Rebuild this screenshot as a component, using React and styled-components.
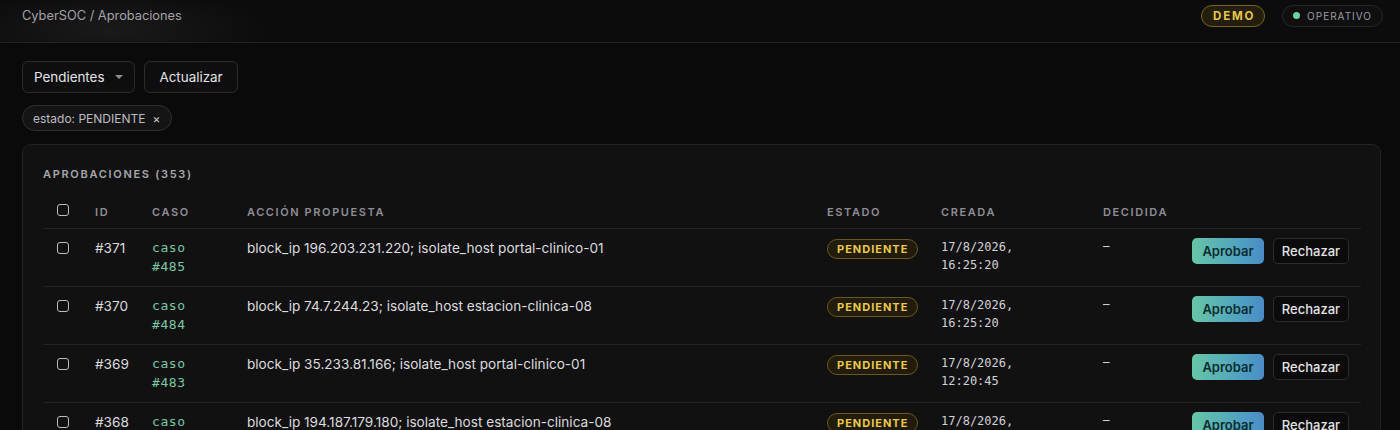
import React from 'react';
import styled, { createGlobalStyle } from 'styled-components';

const GlobalStyle = createGlobalStyle`
  html, body {
    margin: 0;
    background: #0a0a0b;
    color: #e2e2e2;
    font-family: Inter, "Noto Sans", sans-serif;
  }
  * { box-sizing: border-box; }
`;

const Page = styled.div`
  min-height: 430px;
  background: #0a0a0b;
`;

const TopBar = styled.header`
  height: 43px;
  display: flex;
  align-items: center;
  justify-content: space-between;
  padding: 0 17px 0 22px;
  border-bottom: 1px solid #232324;
  background: radial-gradient(ellipse 160px 40px at 110px 30px, #1a1a1b 0%, rgba(10,10,11,0) 100%), #0c0c0d;
`;

const Crumb = styled.div`
  font-size: 12.8px;
  color: #a3a3a6;
  margin-top: -12px;
`;

const Badges = styled.div`
  display: flex;
  align-items: center;
  gap: 17px;
  margin-top: -11px;
`;

const DemoPill = styled.span`
  display: inline-flex;
  align-items: center;
  height: 22px;
  padding: 0 9px 0 11px;
  border-radius: 11px;
  border: 1px solid #7a6520;
  background: #241f0c;
  color: #e9c64a;
  font-size: 11.5px;
  font-weight: 700;
  letter-spacing: 1.8px;
`;

const StatusPill = styled.span`
  display: inline-flex;
  align-items: center;
  gap: 7px;
  height: 22px;
  padding: 0 10px 0 10px;
  border-radius: 11px;
  border: 1px solid #262628;
  background: #0f0f10;
  color: #9c9ca0;
  font-size: 10px;
  letter-spacing: 1px;
`;

const Dot = styled.i`
  width: 7px;
  height: 7px;
  border-radius: 50%;
  background: #6fd0a2;
`;

const Main = styled.main`
  padding: 18px 19px 0 22px;
`;

const Toolbar = styled.div`
  display: flex;
  gap: 9px;
`;

const Control = styled.button`
  height: 32px;
  display: inline-flex;
  align-items: center;
  gap: 11px;
  padding: 0 ${p => (p.$select ? '11px' : '14px')} 0 ${p => (p.$select ? '11px' : '14px')};
  border: 1px solid #2c2c2e;
  border-radius: 6px;
  background: #0e0e0f;
  color: #e4e4e6;
  font: 13.4px Inter, sans-serif;
`;

const Caret = styled.span`
  width: 0;
  height: 0;
  border-left: 4px solid transparent;
  border-right: 4px solid transparent;
  border-top: 4px solid #8e8e92;
`;

const Chip = styled.span`
  display: inline-flex;
  align-items: center;
  gap: 7px;
  margin-top: 12px;
  height: 26px;
  padding: 0 11px 0 10px;
  border-radius: 13px;
  border: 1px solid #303032;
  background: #141415;
  color: #bcbcc0;
  font-size: 12px;
`;

const ChipX = styled.span`
  font-size: 12px;
  color: #c8c8cc;
`;

const Card = styled.section`
  margin-top: 13px;
  border: 1px solid #232325;
  border-radius: 9px;
  background: #111112;
  padding: 22px 20px 0 20px;
  height: 300px;
`;

const CardTitle = styled.h2`
  margin: 0;
  font-size: 11px;
  font-weight: 600;
  letter-spacing: 1.7px;
  color: #a7a7ab;
  line-height: 14px;
`;

const Table = styled.table`
  margin-top: 15px;
  width: 1318px;
  border-collapse: collapse;
  table-layout: fixed;
`;

const Th = styled.th`
  width: ${p => p.$w}px;
  height: 32px;
  padding: 0 0 0 ${p => (p.$pad ?? 10)}px;
  text-align: left;
  font-size: 11px;
  font-weight: 600;
  letter-spacing: 1.6px;
  color: #8e8e92;
  border-bottom: 1px solid #232325;
  vertical-align: middle;
`;

const Tr = styled.tr`
  height: 58px;
  border-bottom: 1px solid #232325;
`;

const Td = styled.td`
  padding: 9px 0 0 ${p => (p.$pad ?? 10)}px;
  vertical-align: top;
  font-size: 13.6px;
  line-height: 20px;
  color: #dcdcde;
`;

const Check = styled.span`
  display: inline-block;
  width: 12px;
  height: 12px;
  margin-top: ${p => (p.$head ? 0 : 4)}px;
  border: 1.5px solid #bdbdc1;
  border-radius: 3px;
`;

const CaseLink = styled.span`
  display: block;
  font-family: "DejaVu Sans Mono", monospace;
  font-size: 13px;
  letter-spacing: 0.6px;
  line-height: 19px;
  color: #79c9a3;
`;

const Line = styled.span`
  display: block;
`;

const Mono = styled.span`
  display: block;
  font-family: "DejaVu Sans Mono", monospace;
  font-size: 12px;
  line-height: 18px;
  color: #d2d2d4;
`;

const StatePill = styled.span`
  display: inline-flex;
  align-items: center;
  height: 20px;
  padding: 0 9px;
  border-radius: 10px;
  border: 1px solid #6a581c;
  background: #211c0b;
  color: #ebc94c;
  font-size: 11px;
  font-weight: 700;
  letter-spacing: 1px;
`;

const Actions = styled.div`
  display: flex;
  gap: 9px;
  padding-right: 12px;
`;

const Dash = styled.span`
  flex: 1;
  font-size: 13px;
  line-height: 16px;
  color: #cfcfd2;
`;

const Approve = styled.button`
  height: 26px;
  width: 72px;
  border: 0;
  border-radius: 5px;
  background: linear-gradient(90deg, #66c6a6 0%, #4f9fc2 70%, #4a8cc6 100%);
  color: #0c2d2e;
  font: 600 13px Inter, sans-serif;
`;

const Reject = styled.button`
  height: 26px;
  width: 76px;
  border: 1px solid #2c2c2e;
  border-radius: 5px;
  background: #0b0b0c;
  color: #e3e3e5;
  font: 500 13px Inter, sans-serif;
`;

const rows = [
  { id: 371, caso: 485, action: 'block_ip 196.203.231.220; isolate_host portal-clinico-01', date: '17/8/2026,', time: '16:25:20' },
  { id: 370, caso: 484, action: 'block_ip 74.7.244.23; isolate_host estacion-clinica-08', date: '17/8/2026,', time: '16:25:20' },
  { id: 369, caso: 483, action: 'block_ip 35.233.81.166; isolate_host portal-clinico-01', date: '17/8/2026,', time: '12:20:45' },
  { id: 368, caso: 482, action: 'block_ip 194.187.179.180; isolate_host estacion-clinica-08', date: '17/8/2026,', time: '12:20:45' },
];

export default function App() {
  return (
    <Page>
      <GlobalStyle />
      <TopBar>
        <Crumb>CyberSOC / Aprobaciones</Crumb>
        <Badges>
          <DemoPill>DEMO</DemoPill>
          <StatusPill><Dot />OPERATIVO</StatusPill>
        </Badges>
      </TopBar>
      <Main>
        <Toolbar>
          <Control $select>Pendientes <Caret /></Control>
          <Control>Actualizar</Control>
        </Toolbar>
        <Chip>estado: PENDIENTE <ChipX>×</ChipX></Chip>
        <Card>
          <CardTitle>APROBACIONES (353)</CardTitle>
          <Table>
            <thead>
              <tr>
                <Th $w={42} $pad={14}><Check $head /></Th>
                <Th $w={57}>ID</Th>
                <Th $w={95}>CASO</Th>
                <Th $w={580}>ACCIÓN PROPUESTA</Th>
                <Th $w={114}>ESTADO</Th>
                <Th $w={162}>CREADA</Th>
                <Th $w={268}>DECIDIDA</Th>
              </tr>
            </thead>
            <tbody>
              {rows.map(r => (
                <Tr key={r.id}>
                  <Td $pad={14}><Check /></Td>
                  <Td>#{r.id}</Td>
                  <Td>
                    <CaseLink>
                      <Line>caso</Line>
                      <Line>#{r.caso}</Line>
                    </CaseLink>
                  </Td>
                  <Td>{r.action}</Td>
                  <Td><StatePill>PENDIENTE</StatePill></Td>
                  <Td>
                    <Mono>
                      <Line>{r.date}</Line>
                      <Line>{r.time}</Line>
                    </Mono>
                  </Td>
                  <Td>
                    <Actions>
                      <Dash>–</Dash>
                      <Approve>Aprobar</Approve>
                      <Reject>Rechazar</Reject>
                    </Actions>
                  </Td>
                </Tr>
              ))}
            </tbody>
          </Table>
        </Card>
      </Main>
    </Page>
  );
}
